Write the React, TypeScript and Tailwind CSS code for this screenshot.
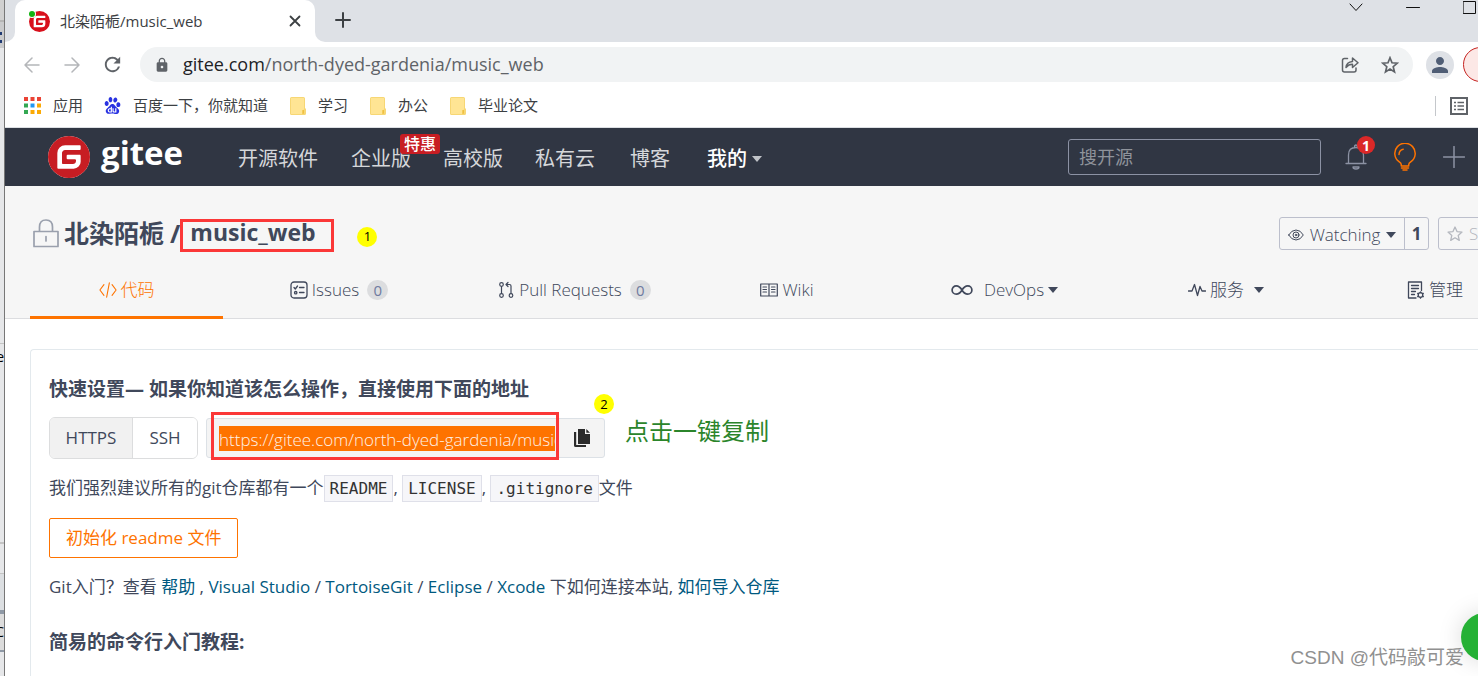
import type { ReactNode } from "react";
import { SiBaidu, SiGitee } from "react-icons/si";
import { MdLock, MdPerson, MdRefresh } from "react-icons/md";

const stroke = { fill: "none", stroke: "currentColor", strokeLinecap: "round", strokeLinejoin: "round" } as const;

function Caret({ className = "" }: { className?: string }) {
  return (
    <svg viewBox="0 0 10 6" className={`h-[6px] w-[10px] shrink-0 ${className}`} fill="currentColor">
      <path d="M0 0h10L5 6z" />
    </svg>
  );
}

function Folder() {
  return (
    <svg viewBox="0 0 16 18" className="h-[18px] w-4">
      <path d="M0 1.5Q0 0 1.5 0h12Q15 0 15 1.5V11l1 1v4.5q0 1.5-1.5 1.5h-13Q0 18 0 16.500z" fill="#f7d774" />
      <path d="M1 1h13v11.500l-2 1V17H1z" fill="#ffe594" />
      <path d="M12.500 17v-4h1.500v3.500z" fill="#f0c040" />
    </svg>
  );
}

function AppsGrid() {
  const colors = ["#ea4335", "#ea4335", "#ea4335", "#34a853", "#2196f3", "#fbaa05", "#34a853", "#fbaa05", "#fbaa05"];
  return (
    <svg viewBox="0 0 17 17" className="h-[17px] w-[17px]">
      {colors.map((c, i) => (
        <rect key={i} x={(i % 3) * 6.500} y={Math.floor(i / 3) * 6.500} width="4" height="4" fill={c} />
      ))}
    </svg>
  );
}

function TitleBar() {
  return (
    <div className="flex h-[42px] items-end bg-[#dee1e6]">
      <div className="h-3 w-[10px] bg-white">
        <div className="h-full rounded-br-[10px] bg-[#dee1e6]" />
      </div>
      <div className="flex h-[42px] w-[300px] shrink-0 items-center rounded-t-[10px] bg-white pr-[14px] pl-[14px]">
        <span className="relative mr-[10px] h-[21px] w-[21px] shrink-0">
          <SiGitee className="h-[21px] w-[21px] text-[#d8101c]" />
          <span className="absolute top-0 left-0 h-[6px] w-[6px] rounded-full bg-[#12b312] ring-1 ring-white" />
        </span>
        <span className="text-[15px] text-[#3c4043]">北染陌栀/music_web</span>
        <button aria-label="Close tab" className="ml-auto">
          <svg viewBox="0 0 12 12" className="h-3 w-3 text-[#3c4043]" {...stroke} strokeWidth="1.800">
            <path d="M1.500 1.500l9 9M10.500 1.500l-9 9" />
          </svg>
        </button>
      </div>
      <div className="h-3 w-[10px] bg-white">
        <div className="h-full rounded-bl-[10px] bg-[#dee1e6]" />
      </div>
      <button aria-label="New tab" className="mb-[14px] ml-[10px]">
        <svg viewBox="0 0 16 16" className="h-4 w-4 text-[#3c4043]" {...stroke} strokeWidth="2">
          <path d="M8 1v14M1 8h14" />
        </svg>
      </button>
      <div className="mb-7 ml-auto flex shrink-0 items-center gap-[43px] text-[#111]">
        <button aria-label="Search tabs">
          <svg viewBox="0 0 14 14" className="h-[14px] w-[14px]" {...stroke} strokeWidth="1">
            <path d="M1 4l6 6.500L13 4" />
          </svg>
        </button>
        <button aria-label="Minimize">
          <svg viewBox="0 0 14 14" className="h-[14px] w-[14px]" {...stroke} strokeWidth="1">
            <path d="M.5 7.500h13" />
          </svg>
        </button>
        <button aria-label="Maximize">
          <svg viewBox="0 0 15 14" className="h-[14px] w-[15px]" {...stroke} strokeWidth="1">
            <path d="M.5 1.500h12v12H.5z" />
          </svg>
        </button>
      </div>
    </div>
  );
}

function AddressBar() {
  return (
    <div className="flex h-[45px] items-center overflow-hidden bg-white pl-[19px]">
      <button aria-label="Back" className="mr-6 text-[#b4b6b9]">
        <svg viewBox="0 0 16 16" className="h-4 w-4" {...stroke} strokeWidth="1.500">
          <path d="M15 8H1M8 1L1 8l7 7" />
        </svg>
      </button>
      <button aria-label="Forward" className="mr-[21px] text-[#b4b6b9]">
        <svg viewBox="0 0 16 16" className="h-4 w-4" {...stroke} strokeWidth="1.500">
          <path d="M1 8h14M8 1l7 7-7 7" />
        </svg>
      </button>
      <button aria-label="Reload" className="mr-[16px] text-[#5f6368]">
        <MdRefresh className="h-[23px] w-[23px]" />
      </button>
      <div className="flex h-[35px] min-w-0 flex-1 items-center rounded-full bg-[#f1f3f4] px-[14px]">
        <MdLock className="mr-[13px] h-4 w-4 shrink-0 text-[#5f6368]" />
        <span className="text-[18px] text-[#5f6368]">
          <span className="text-[#202124]">gitee.com</span>/north-dyed-gardenia/music_web
        </span>
        <button aria-label="Share" className="ml-auto text-[#5f6368]">
          <svg viewBox="0 0 18 18" className="h-[18px] w-[18px]" {...stroke} strokeWidth="1.500">
            <path d="M6.500 2.500H3.500q-2 0-2 2v9.500q0 2 2 2h9.500q2 0 2-2v-2" />
            <path d="M5 11.500Q5.500 6 11.500 5.500V2l5.500 4.700-5.500 4.800V8.300Q7.500 8.300 5 11.500z" />
          </svg>
        </button>
        <button aria-label="Bookmark" className="ml-[22px] text-[#5f6368]">
          <svg viewBox="0 0 18 18" className="h-[18px] w-[18px]" {...stroke} strokeLinejoin="miter" strokeWidth="1.700">
            <path d="M9 1.800l2 5 5.300.4-4.100 3.500 1.300 5.200L9 13.100l-4.500 2.800 1.300-5.200L1.700 7.200 7 6.800z" />
          </svg>
        </button>
      </div>
      <button aria-label="Profile" className="ml-[13px] flex h-7 w-7 shrink-0 items-center justify-center rounded-full bg-[#dee1e6] text-[#4f5d75]">
        <MdPerson className="h-6 w-6" />
      </button>
      <div className="ml-[9px] w-[15px] shrink-0 overflow-hidden">
        <button aria-label="Update" className="block h-[35px] w-20 rounded-full border border-[#c5221f] bg-[#fce8e6]" />
      </div>
    </div>
  );
}

function Bookmarks() {
  const folders = ["学习", "办公", "毕业论文"];
  return (
    <div className="flex h-[41px] items-center border-b border-[#dcdfe3] bg-white pb-[3px] pl-[19px] text-[15px] text-[#3c4043]">
      <a href="#apps" className="flex items-center gap-3">
        <AppsGrid />
        应用
      </a>
      <a href="#baidu" className="mr-[22px] ml-[21px] flex items-center gap-3">
        <SiBaidu className="h-[17px] w-[17px] text-[#2932e1]" />
        百度一下，你就知道
      </a>
      <div className="flex gap-[22px]">
        {folders.map((f) => (
          <button key={f} className="flex items-center gap-3">
            <Folder />
            {f}
          </button>
        ))}
      </div>
      <div className="ml-auto flex items-center pr-[10px]">
        <span className="mr-[14px] h-5 w-px bg-[#c4c7cb]" />
        <button aria-label="Reading list" className="text-[#5f6368]">
          <svg viewBox="0 0 18 18" className="h-[18px] w-[18px]" fill="none" stroke="currentColor" strokeWidth="2">
            <path d="M1 1h16v16H1z" />
            <path d="M4 5.500h2M4 9h2M4 12.500h2M7.500 5.500H14M7.500 9H14M7.500 12.500H14" strokeWidth="1.500" />
          </svg>
        </button>
      </div>
    </div>
  );
}

function SiteHeader() {
  return (
    <header className="flex h-[58px] items-center overflow-hidden bg-[#303643] pl-[43px] text-[20px] text-[#d5d7da]">
      <a href="#home" aria-label="gitee" className="flex shrink-0 items-center gap-[11px]">
        <span className="rounded-full bg-white">
          <SiGitee className="h-[42px] w-[42px] text-[#c71d23]" />
        </span>
        <span className="pb-2 text-[33px] leading-[40px] font-bold text-white">gitee</span>
      </a>
      <nav className="ml-[55px] flex shrink-0 items-center pt-1">
        <a href="#open" className="mr-[33px]">开源软件</a>
        <a href="#ent" className="relative mr-8">
          企业版
          <span className="absolute -top-[10px] left-[49px] rounded-[3px] bg-[#c71d23] px-[4px] text-[16px] leading-[20px] font-medium whitespace-nowrap text-white">
            特惠
          </span>
        </a>
        <a href="#edu" className="mr-8">高校版</a>
        <a href="#cloud" className="mr-[35px]">私有云</a>
        <a href="#blog" className="mr-[37px]">博客</a>
        <button className="flex items-center gap-[5px] font-medium text-white">
          我的
          <Caret className="text-[#c0c3c8]" />
        </button>
      </nav>
      <input
        aria-label="搜开源"
        placeholder="搜开源"
        className="ml-auto h-9 w-[253px] shrink-0 rounded-[3px] border border-[#8c92a4] bg-transparent px-[10px] text-[18px] placeholder:text-[#8f939b]"
      />
      <button aria-label="Notifications" className="relative ml-6 shrink-0 text-[#8c92a4]">
        <svg viewBox="0 0 22 26" className="h-[26px] w-[22px]" {...stroke} strokeWidth="1.300">
          <path d="M3.500 19V11Q3.500 3.500 11 3.500t7.500 7.500v8M1 19.500h20M9.500 3q0-2 1.500-2t1.500 2M8 23q0 2 3 2t3-2z" />
        </svg>
        <span className="absolute -top-[8px] left-3 flex h-[18px] w-[18px] items-center justify-center rounded-full bg-[#db2828] text-[14px] font-bold text-white">
          1
        </span>
      </button>
      <button aria-label="Tips" className="ml-[26px] shrink-0 text-[#fe7300]">
        <svg viewBox="0 0 24 28" className="h-7 w-6" {...stroke} strokeWidth="1.500">
          <path d="M8.300 23v-1.200Q8.300 20.300 6 18.700A10.200 10.200 0 1 1 18 18.700Q15.700 20.300 15.700 21.800V23zM8.500 25h7M10 27h4" />
          <path d="M6 11.500q.2-4.500 4.200-5.300" />
        </svg>
      </button>
      <button aria-label="Create" className="mr-[13px] ml-[26px] shrink-0 text-[#8c92a4]">
        <svg viewBox="0 0 22 22" className="h-[22px] w-[22px]" {...stroke} strokeWidth="1.500">
          <path d="M11 .5v21M.5 11h21" />
        </svg>
      </button>
    </header>
  );
}

const tabIcon = "h-[18px] w-[18px] shrink-0";

function Count() {
  return (
    <span className="ml-1 flex h-5 w-[21px] items-center justify-center rounded-full bg-[#dcdddf] text-[15px] font-normal text-[#6f7ba0]">0</span>
  );
}

function Tab({ width, active = false, children }: { width: string; active?: boolean; children: ReactNode }) {
  return (
    <a
      href="#tab"
      className={`${width} flex h-[58px] shrink-0 items-center justify-center gap-[4px] border-b-[3px] pt-[3px] ${
        active ? "border-[#fe7300] text-[#fe7300]" : "border-transparent"
      }`}
    >
      {children}
    </a>
  );
}

function RepoHeader() {
  return (
    <section className="border-b border-[#dcdde0] bg-[#f6f6f6] text-[#40485b]">
      <div className="flex h-[75px] items-center overflow-hidden pt-5 pl-7">
        <svg viewBox="0 0 26 29" className="mr-[5px] h-[29px] w-[26px] text-[#9aa0ad]" {...stroke} strokeWidth="1.700">
          <path d="M1 12.500h24v15H1zM6.500 12.500V8Q6.500 1 13 1t6.500 7v4.500M13 17.500v4.500" />
        </svg>
        <h1 className="flex items-center text-[25px] font-bold">
          <a href="#owner">北染陌栀</a>
          <span className="ml-[6px]">/</span>
          <a href="#repo" className="mt-[3px] flex h-[33px] w-[154px] items-center border-[3px] border-[#fb3838] pb-[7px] pl-[7px] text-[23px] leading-[26px]">
            music_web
          </a>
        </h1>
        <span className="mt-[7px] ml-[23px] flex h-5 w-5 items-center justify-center rounded-full bg-[#ffff00] text-[13px] text-black">1</span>
        <div className="ml-auto flex shrink-0 text-[17px] font-light">
          <div className="flex h-[33px] w-[150px] items-center rounded-[3px] border border-[#bcbfcc]">
            <button className="flex flex-1 items-center justify-center gap-[6px] pt-[2px]">
              <svg viewBox="0 0 16 12" className="h-3 w-4" {...stroke} strokeWidth="1">
                <path d="M.7 6Q3.500 1 8 1t7.300 5Q12.500 11 8 11T.7 6z" />
                <circle cx="8" cy="6" r="3" />
                <circle cx="8" cy="6" r=".8" />
              </svg>
              Watching
              <Caret />
            </button>
            <span className="flex h-full w-6 items-center justify-center border-l border-[#bcbfcc] pt-px font-bold">1</span>
          </div>
          <div className="ml-[9px] w-10 overflow-hidden">
            <button className="flex h-[33px] w-24 items-center gap-[6px] rounded-[3px] border border-[#bcbfcc] pl-2 text-[#b4b7be]">
              <svg viewBox="0 0 16 16" className="h-4 w-4 shrink-0" {...stroke} strokeWidth="1.300">
                <path d="M8 1l2 4.600 5 .5-3.800 3.300 1.100 5L8 11.800l-4.300 2.600 1.100-5L1 6.100l5-.5z" />
              </svg>
              Star
            </button>
          </div>
        </div>
      </div>
      <nav className="-mb-px flex overflow-hidden pl-[25px] text-[17px] font-light">
        <Tab width="w-[193px]" active>
          <svg viewBox="0 0 20 18" className={tabIcon} {...stroke} strokeWidth="1.200">
            <path d="M5.500 3L1 9l4.500 6M14.500 3L19 9l-4.500 6M11.500 1l-3 16" />
          </svg>
          代码
        </Tab>
        <Tab width="w-[232px]">
          <svg viewBox="0 0 18 18" className={tabIcon} {...stroke} strokeWidth="1.300">
            <rect x="1" y="1" width="16" height="16" rx="3" />
            <path d="M4 6.500L5.300 8 7.500 5M9.500 6.500H14M9.500 11.500H14" />
            <circle cx="5.700" cy="11.700" r="1.200" />
          </svg>
          Issues
          <Count />
        </Tab>
        <Tab width="w-[238px]">
          <svg viewBox="0 0 18 18" className={tabIcon} {...stroke} strokeWidth="1.200">
            <circle cx="4.500" cy="3.500" r="1.800" />
            <circle cx="4.500" cy="14.500" r="1.800" />
            <circle cx="14" cy="14.500" r="1.800" />
            <path d="M4.500 5.500v7M14 12.500V5q0-1.500-1.500-1.500H9M11 1.500l-2 2 2 2" />
          </svg>
          Pull Requests
          <Count />
        </Tab>
        <Tab width="w-[188px]">
          <svg viewBox="0 0 18 18" className={tabIcon} {...stroke} strokeWidth="1.200">
            <path d="M.7 3h16.600v12H.7zM9 3v12M3 6h3.500M3 8.500h3.500M3 11h3.500M11.500 6H15M11.500 8.500H15M11.500 11H15" />
          </svg>
          Wiki
        </Tab>
        <Tab width="w-[246px]">
          <svg viewBox="0 0 24 12" className="mr-[6px] h-3 w-6" {...stroke} strokeWidth="1.700">
            <path d="M12 6Q9.500 1.800 6.300 1.800a4.200 4.200 0 0 0 0 8.400Q9.500 10.200 12 6t5.700-4.200a4.200 4.200 0 0 1 0 8.400Q14.500 10.200 12 6z" />
          </svg>
          DevOps
          <Caret />
        </Tab>
        <Tab width="w-[198px]">
          <svg viewBox="0 0 18 18" className={tabIcon} {...stroke} strokeWidth="1.300">
            <path d="M.5 10H4l2.500-6.500 3 11L12 5.500l2 4.500h3.500" />
          </svg>
          服务
          <Caret className="ml-[6px]" />
        </Tab>
        <Tab width="w-[220px]">
          <svg viewBox="0 0 18 18" className={tabIcon} {...stroke} strokeWidth="1.300">
            <path d="M9 17H1.500V1h13v8.500M4.500 4.500h7M4.500 7.500h7M4.500 10.500h4M4.500 13.500h3" />
            <circle cx="13.500" cy="14" r="2.300" />
            <path d="M13.500 10.800v.9M13.500 16.300v.9M10.700 12.400l.8.400M15.500 15.200l.8.400M10.700 15.600l.8-.4M15.500 12.800l.8-.4" />
          </svg>
          管理
        </Tab>
      </nav>
    </section>
  );
}

function Code({ children }: { children: ReactNode }) {
  return (
    <code className="border border-[#dfe0e9] bg-[#f6f6f9] px-[5px] py-[3px] font-['DejaVu_Sans_Mono',monospace] text-[16px] text-[#333]">
      {children}
    </code>
  );
}

function Link({ children }: { children: ReactNode }) {
  return (
    <a href="#help" className="text-[#005980]">
      {children}
    </a>
  );
}

function QuickSetup() {
  return (
    <main className="mt-[30px] ml-[25px] flex-1 rounded-tl-[4px] border-t border-l border-[#e3e9ed] pt-[26px] pl-[18px] text-[17px] text-[#40485b]">
      <h2 className="text-[19px] leading-[26px] font-bold">快速设置— 如果你知道该怎么操作，直接使用下面的地址</h2>
      <div className="mt-[11px] flex h-[50px] items-center">
        <div className="flex h-[42px] w-[149px] overflow-hidden rounded-[6px] border border-[#dcddde]">
          <button className="w-[83px] border-r border-[#dcddde] bg-[#f1f1f1]">HTTPS</button>
          <button className="flex-1 bg-white">SSH</button>
        </div>
        <div className="ml-2 flex h-10 w-[399px] items-center rounded-[3px] border border-[#dce1e6] bg-[#f4f4f4]">
          <div className="mb-1 ml-[4px] flex h-12 w-[348px] shrink-0 items-end border-[3px] border-[#fb3838] pr-px pb-[6px] pl-[5px]">
            <input
              aria-label="Repository URL"
              readOnly
              defaultValue="https://gitee.com/north-dyed-gardenia/music_web.git"
              className="h-[25px] w-full bg-[#fe7300] pt-[2px] text-[17px] font-light text-[#fff1e6] outline-none"
            />
          </div>
          <button aria-label="Copy" className="flex flex-1 justify-center text-[#2b2b2b]">
            <svg viewBox="0 0 16 18" className="h-[18px] w-4" fill="currentColor">
              <path d="M4 0h7v5h5v10H4z" />
              <path d="M12.300 0L16 3.800h-3.700z" />
              <path d="M0 3h2.200v13H12v2H1.500Q0 18 0 16.500z" />
            </svg>
          </button>
        </div>
        <div className="relative ml-5 text-[24px] leading-[30px] text-[#2b852b]">
          <span className="absolute -top-[22px] -left-[31px] flex h-5 w-5 items-center justify-center rounded-full bg-[#ffff00] text-[13px] text-black">2</span>
          <p className="pb-[14px]">点击一键复制</p>
        </div>
      </div>
      <p className="mt-[8px] leading-[34px]">
        我们强烈建议所有的git仓库都有一个<Code>README</Code>, <Code>LICENSE</Code>, <Code>.gitignore</Code>文件
      </p>
      <button className="mt-3 h-10 rounded-[2px] border border-[#fe7300] px-4 text-[#fe7300]">初始化 readme 文件</button>
      <p className="mt-3 leading-[34px]">
        Git入门？查看 <Link>帮助</Link> , <Link>Visual Studio</Link> / <Link>TortoiseGit</Link> / <Link>Eclipse</Link> /{" "}
        <Link>Xcode</Link> 下如何连接本站, <Link>如何导入仓库</Link>
      </p>
      <h2 className="mt-[25px] text-[19px] leading-[26px] font-bold">简易的命令行入门教程:</h2>
    </main>
  );
}

function WindowBehind() {
  return (
    <aside aria-hidden="true" className="flex w-[5px] shrink-0 flex-col overflow-hidden border-r border-[#777] bg-[#e6e7e9]">
      <div className="h-[22px] border-b-2 border-[#b5b5b5] bg-[#d0d0d0]" />
      <div className="h-[26px] bg-[#c9cacc] pt-[10px]">
        <div className="mb-[5px] h-[3px] w-[2px] bg-[#1f3a73]" />
        <div className="h-[3px] w-[2px] bg-[#1f3a73]" />
      </div>
      <div className="h-[296px] border-b border-[#c4c4c4]" />
      <div className="flex h-[200px] justify-end border-b-2 border-[#c4c4c4] text-[14px] leading-[26px] text-black">e</div>
      <div className="h-[30px] border-b border-[#c4c4c4]" />
      <div className="h-10 border-b-4 border-[#8f99a6] bg-[#dcdfe2]" />
      <div className="flex h-[38px] justify-end border-b-2 border-[#8f99a6] bg-[#dcdcdc] text-[14px] leading-[36px] text-black">C</div>
    </aside>
  );
}

export default function App() {
  return (
    <div className="relative flex h-screen overflow-hidden bg-white font-['Open_Sans','Noto_Sans_CJK_SC',sans-serif]">
      <WindowBehind />
      <div className="flex min-w-0 flex-1 flex-col">
        <TitleBar />
        <AddressBar />
        <Bookmarks />
        <SiteHeader />
        <RepoHeader />
        <QuickSetup />
      </div>
      <button aria-label="Support" className="absolute right-[-31px] bottom-[15px] h-12 w-12 rounded-full bg-[#25b135] shadow-[0_0_24px_rgba(0,0,0,0.15)]" />
      <span className="absolute right-[14px] bottom-[4px] font-['Liberation_Sans','Noto_Sans_CJK_SC',sans-serif] text-[19px] text-[#909090]">
        CSDN @代码敲可爱
      </span>
    </div>
  );
}
